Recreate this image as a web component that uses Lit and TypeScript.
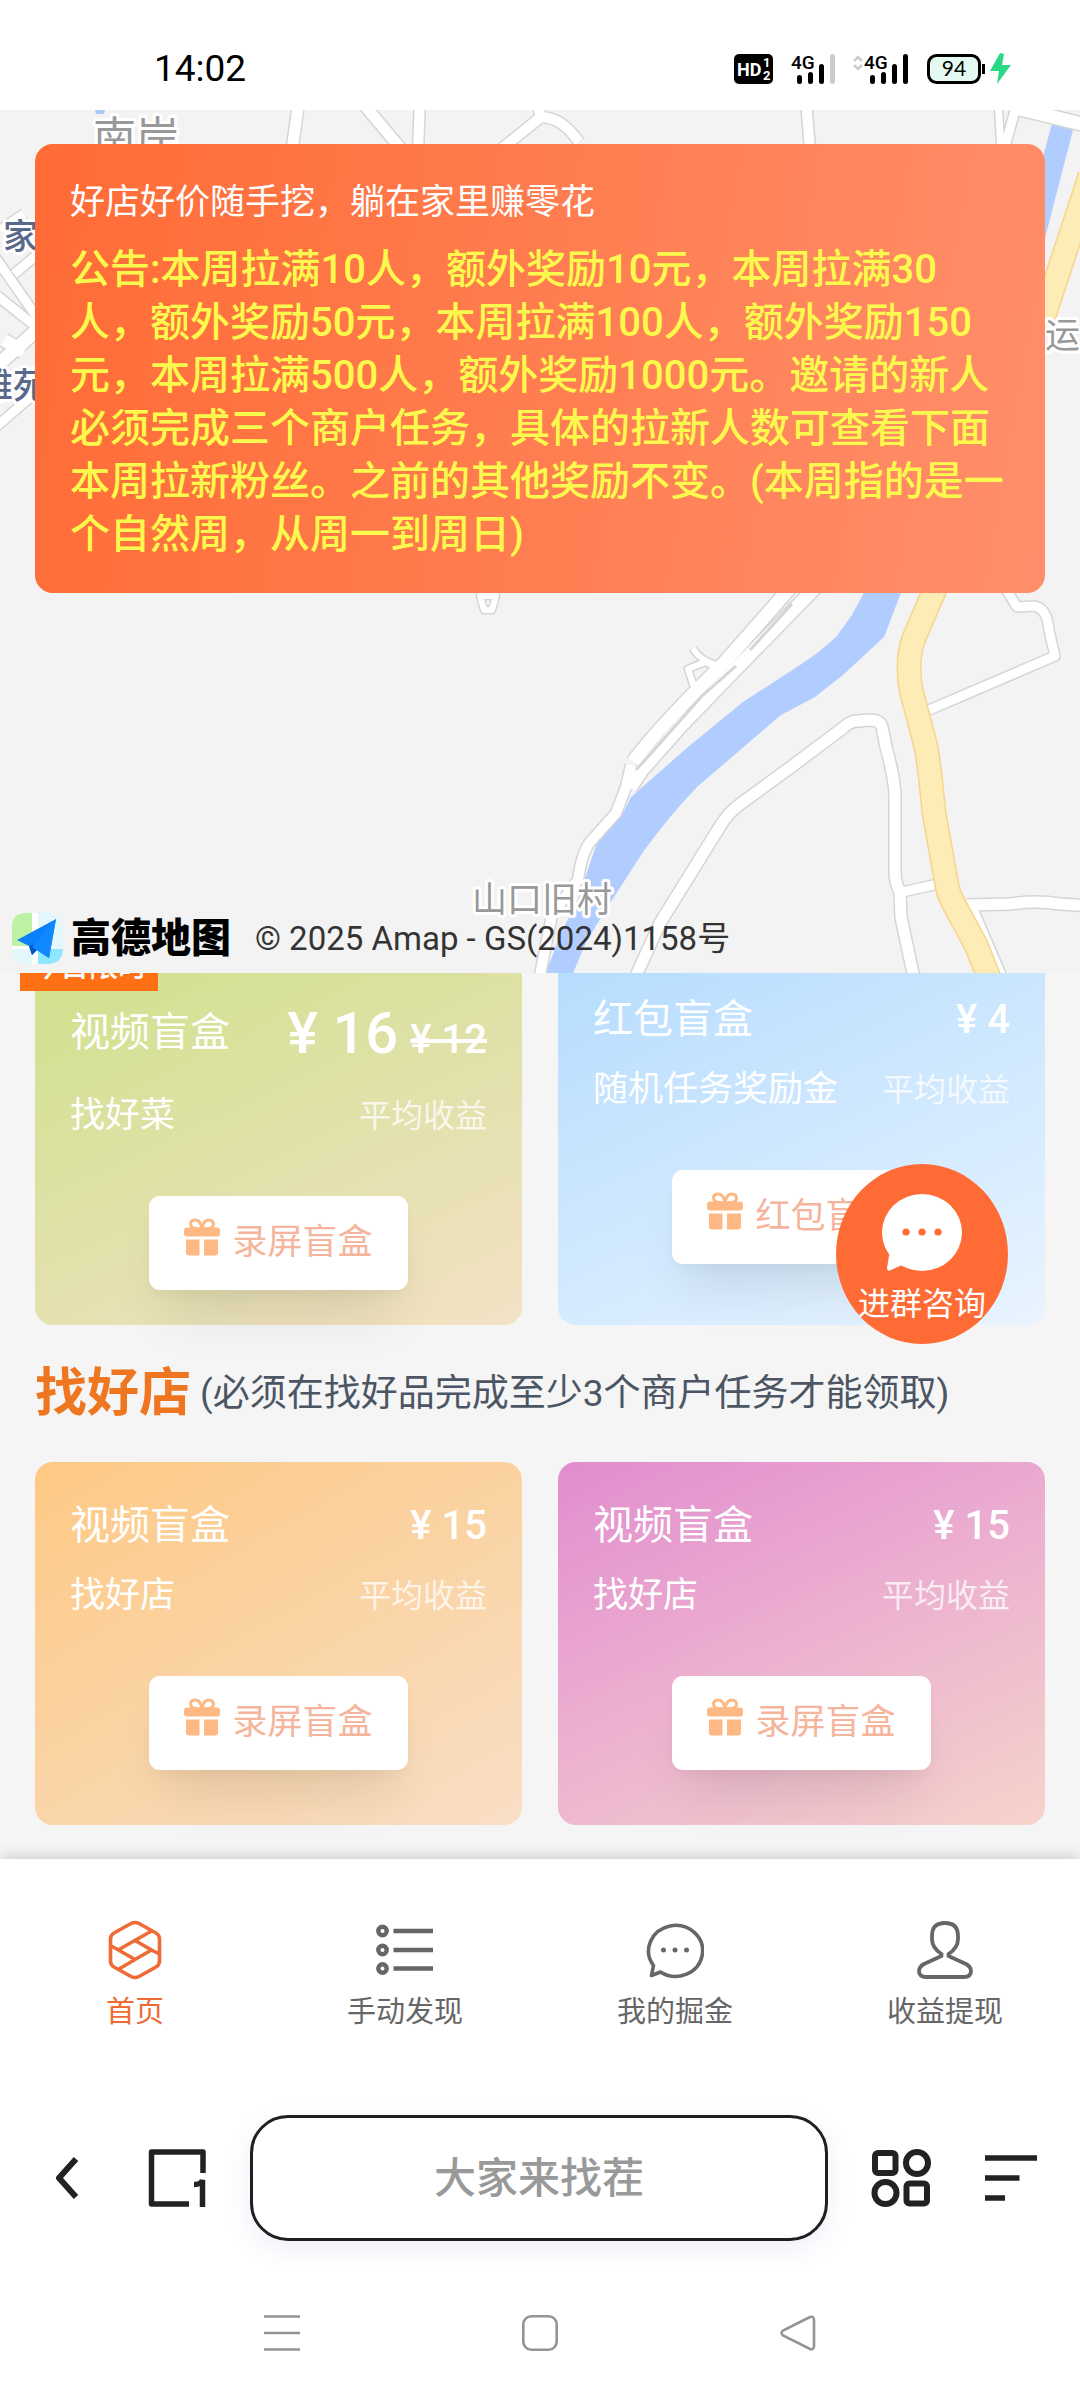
import { LitElement, html, css, svg, nothing } from "lit";
import { customElement, property } from "lit/decorators.js";
import { classMap } from "lit/directives/class-map.js";

const base = css`
  *,
  *::before,
  *::after {
    box-sizing: border-box;
  }
  button {
    margin: 0;
    padding: 0;
    border: 0;
    background: none;
    color: inherit;
    font: inherit;
    cursor: pointer;
  }
  svg {
    display: block;
    flex: none;
  }
`;

/* ---------- status bar ---------- */

@customElement("status-bar")
class StatusBar extends LitElement {
  static styles = [
    base,
    css`
      :host {
        display: flex;
        align-items: center;
        justify-content: space-between;
        height: 110px;
        padding: 28px 69px 0 154px;
        background: #fff;
        color: #000;
      }
      .time {
        font-size: 37px;
        line-height: 44px;
      }
      .icons {
        display: flex;
        align-items: center;
        gap: 18px;
      }
      .icons svg {
        overflow: visible;
      }
      .net {
        font: 500 19px Roboto, sans-serif;
      }
      .hd {
        font: 700 18px Roboto, sans-serif;
      }
      .sub {
        font: 700 13px Roboto, sans-serif;
      }
      .level {
        font: 400 21px Lato, sans-serif;
      }
    `,
  ];

  render() {
    return html`
      <time class="time">14:02</time>
      <div class="icons">
        <svg width="39" height="30" viewBox="0 0 39 30">
          <rect width="39" height="30" rx="5" fill="#000" />
          <text class="hd" x="3" y="22" fill="#fff">HD</text>
          <text class="sub" x="29" y="13" fill="#fff">1</text>
          <text class="sub" x="29" y="26" fill="#fff">2</text>
        </svg>
        <svg width="44" height="30" viewBox="0 0 44 30">
          <text class="net" x="0" y="15">4G</text>
          <g stroke-width="5" stroke-linecap="round" stroke="#000">
            <path d="M8.500 23.500v4M19.500 20.500v7M30.500 12.500v15" />
            <path d="M41.500 2.500v25" stroke="#ccc" />
          </g>
        </svg>
        <svg width="56" height="30" viewBox="0 0 56 30">
          <path d="M1 7l4-4 4 4M1 11l4 4 4-4" fill="none" stroke="#ccc" stroke-width="2.500" />
          <text class="net" x="11" y="15">4G</text>
          <path
            d="M19.500 23.500v4M30.500 20.500v7M41.500 12.500v15M52.500 2.500v25"
            stroke-width="5"
            stroke-linecap="round"
            stroke="#000"
          />
        </svg>
        <svg width="84" height="32" viewBox="0 0 84 32">
          <rect x="1.500" y="2.500" width="51" height="27" rx="8" fill="#e4f9ef" stroke="#000" stroke-width="3" />
          <path d="M56.500 11v10" stroke="#000" stroke-width="3" />
          <text class="level" x="27" y="23" text-anchor="middle">94</text>
          <path d="M73 0L63 18h9l-2 13 14-19h-9l2-11z" fill="#2bd886" />
        </svg>
      </div>
    `;
  }
}

/* ---------- map ---------- */

type Road = [path: string, width: number];

const ROADS: Road[] = [
  ["M299 100L292 150", 11],
  ["M360 100L402 150", 11],
  ["M420 100L418 150", 10],
  ["M500 150L541 117C556 118 566 124 579 142M536 100L541 117", 10],
  ["M806 100L810 150", 10],
  ["M998 100L1001 150", 7],
  ["M1018 100L1004 150", 9],
  ["M1012 107L1090 126", 13],
  ["M-10 250L46 330M-10 290L50 338M14 274L50 244M0 230L24 214", 9],
  ["M-10 372L46 322M4 340L24 352", 13],
  ["M-10 432L50 380", 9],
  ["M480 596L484 610H492L496 596Z", 6],
  ["M635 978L660 923L719 828Q728 812 743 802L791 767L843 728Q850 721 858 721L870 720Q880 720 882 727L886 747Q895 780 895 797V873Q895 882 900 892L901 917L914 978", 11],
  ["M902 892L938 884", 9],
  ["M929 710L1055 656L1049 630Q1047 608 1034 606L1017 607L1004 586", 9],
  ["M967 905L1010 904Q1036 900 1060 904L1090 906", 11],
  ["M974 910L1003 978", 8],
  ["M540 975L552 915L578 880Q582 850 592 840L616 813L626 787L631 765", 10],
  ["M630 788L642 770L680 727L735 670L815 588", 13],
  ["M633 762Q650 738 697 690L724 663L790 588", 13],
  ["M695 690L688 669L705 662L724 670M693 648Q700 662 722 666", 6],
];

const MEDIANS = "M636 770L654 750L702 696L736 666M750 650L792 604";
const RIVER =
  "M868 585L852 615L836 637Q820 652 800 665L743 702L688 747L631 797L621 817L597 843L586 875L578 900L561 933L544 978H571L587 940L614 897L643 852Q670 815 697 787L781 715L815 697L843 675L884 637L904 585Z";
const RIVER_NORTH = "M1053 120L1074 126L1044 242L1030 242L1036 182Z";
const HIGHWAY = "M938 582L914 638Q906 660 911 690L926 747Q930 770 934 813L946 880Q948 895 956 908L976 945L990 980";
const HIGHWAY_NORTH = "M1090 176L1044 316";

@customElement("map-canvas")
class MapCanvas extends LitElement {
  static styles = [
    base,
    css`
      :host {
        display: block;
      }
      svg {
        width: 100%;
        height: 100%;
      }
      .place {
        font-family: Roboto, "Noto Sans CJK SC", sans-serif;
        fill: #999;
        stroke: #fff;
        stroke-width: 6px;
        stroke-linejoin: round;
        paint-order: stroke;
      }
      .small {
        font-size: 35px;
      }
      .large {
        font-size: 43px;
      }
      .estate {
        font-weight: 500;
        fill: #58698a;
      }
    `,
  ];

  render() {
    return html`
      <svg viewBox="0 110 1080 863" preserveAspectRatio="xMidYMin slice" aria-hidden="true">
        <rect y="110" width="1080" height="863" fill="#f3f3f3" />
        <path d="M94 106h12l-2 8h-8z" fill="#a9c9fb" />
        <path d=${RIVER} fill="#b1cdff" />
        <path d=${RIVER_NORTH} fill="#b1cdff" />
        <g fill="none" stroke="#d5d5d5" stroke-linejoin="round">
          ${ROADS.map(([d, w]) => svg`<path d=${d} stroke-width=${w + 3} />`)}
        </g>
        <g fill="none" stroke="#fff" stroke-linejoin="round">
          ${ROADS.map(([d, w]) => svg`<path d=${d} stroke-width=${w} />`)}
        </g>
        <path d=${MEDIANS} fill="none" stroke="#d5d5d5" stroke-width="3" />
        <g fill="none" stroke="#f7d48c" stroke-width="25">
          <path d=${HIGHWAY} />
          <path d=${HIGHWAY_NORTH} />
        </g>
        <g fill="none" stroke="#feecb6" stroke-width="22">
          <path d=${HIGHWAY} />
          <path d=${HIGHWAY_NORTH} />
        </g>
        <text class="place large" x="93" y="153">南岸</text>
        <text class="place small estate" x="3" y="249">家</text>
        <text class="place small estate" x="-22" y="398">雅苑</text>
        <text class="place small" x="1045" y="348">运</text>
        <text class="place small" x="472" y="912">山口旧村</text>
      </svg>
    `;
  }
}

/* ---------- blind box card ---------- */

const giftIcon = html`
  <svg width="36" height="38" viewBox="0 0 36 38" aria-hidden="true">
    <path
      d="M17 11C10 11 6.500 9 6.500 6S9 2 11.500 2C15 2 17 6 18 10C19 6 21 2 24.500 2S29.500 3.500 29.500 6.500S26 11 19 11"
      fill="none"
      stroke="#fdb883"
      stroke-width="3"
    />
    <path
      d="M3 9.500H33A3 3 0 0 1 36 12.500V15.500A3 3 0 0 1 33 18.500H3A3 3 0 0 1 0 15.500V12.500A3 3 0 0 1 3 9.500ZM2 21.500H15.500V37.500H5A3 3 0 0 1 2 34.500ZM20 21.500H34V34.500A3 3 0 0 1 31 37.500H20Z"
      fill="#fdb883"
    />
  </svg>
`;

@customElement("box-card")
class BoxCard extends LitElement {
  @property() tone = "orange";
  @property() heading = "";
  @property() price = "";
  @property() oldPrice = "";
  @property() source = "";
  @property() action = "";
  @property() badge = "";

  static styles = [
    base,
    css`
      :host {
        display: block;
      }
      .card {
        position: relative;
        display: flex;
        flex-direction: column;
        height: 100%;
        min-height: 363px;
        padding: 34px 35px 35px;
        border-radius: 18px;
        color: #fff;
      }
      .green {
        background: linear-gradient(155deg, #cfe18b, #e2e1ac 55%, #f4e1c5);
      }
      .blue {
        background: linear-gradient(155deg, #b5dcfe, #e9f4ff);
      }
      .orange {
        background: linear-gradient(150deg, #fec984, #fad5a8 55%, #f9dfc6);
      }
      .pink {
        background: linear-gradient(155deg, #e28dce, #ecb1d0 50%, #f6d4cb);
      }
      .row {
        display: flex;
        align-items: center;
        justify-content: space-between;
      }
      .title {
        font-size: 40px;
        line-height: 60px;
      }
      .price {
        font-size: 40px;
        font-weight: 500;
        line-height: 60px;
        white-space: nowrap;
      }
      .big {
        margin-right: 12px;
        font-size: 58px;
        line-height: 86px;
      }
      .meta {
        margin-top: 14px;
        line-height: 52px;
      }
      .source {
        font-size: 35px;
      }
      .hint {
        font-size: 32px;
        opacity: 0.75;
      }
      .action {
        display: flex;
        align-items: center;
        align-self: center;
        gap: 12px;
        height: 94px;
        margin-top: 54px;
        padding: 0 35px;
        border-radius: 11px;
        background: #fff;
        box-shadow: 0 36px 54px -16px rgba(0, 0, 0, 0.1), 0 6px 16px -4px rgba(0, 0, 0, 0.05);
        color: #f5b59c;
        font-size: 35px;
        line-height: 52px;
      }
      .action svg {
        margin-bottom: 12px;
      }
      .badge {
        position: absolute;
        top: -13px;
        left: -15px;
        padding: 0 11px;
        background: #ff6f14;
        font-size: 29px;
        font-weight: 500;
        line-height: 48px;
      }
    `,
  ];

  render() {
    return html`
      <article class="card ${this.tone}">
        ${this.badge ? html`<span class="badge">${this.badge}</span>` : nothing}
        <div class="row">
          <span class="title">${this.heading}</span>
          <span class="price"
            >${this.oldPrice
              ? html`<span class="big">${this.price}</span><s>${this.oldPrice}</s>`
              : this.price}</span
          >
        </div>
        <div class="row meta">
          <span class="source">${this.source}</span>
          <span class="hint">平均收益</span>
        </div>
        <button class="action" type="button">${giftIcon}<span>${this.action}</span></button>
      </article>
    `;
  }
}

/* ---------- page tab bar ---------- */

const homeIcon = html`
  <svg width="58" height="60" viewBox="0 0 58 60" fill="none" stroke="currentColor" stroke-width="3.600" stroke-linejoin="round" aria-hidden="true">
    <path d="M25 3.500Q29 1.500 33 3.500L50 13Q53.500 15 53.500 19V41Q53.500 45 50 47L33 56.500Q29 58.500 25 56.500L8 47Q4.500 45 4.500 41V19Q4.500 15 8 13Z" />
    <path d="M45.500 11L13 29.500M4.500 25.500L29 39.500L45.500 30L29 20.500M29 39.500L13 49M45.500 30L53.500 34" />
  </svg>
`;
const listIcon = html`
  <svg width="58" height="60" viewBox="0 0 58 60" fill="none" stroke="currentColor" stroke-width="4.400" aria-hidden="true">
    <circle cx="6.500" cy="11" r="4.200" />
    <circle cx="6.500" cy="30" r="4.200" />
    <circle cx="6.500" cy="48.500" r="4.200" />
    <path d="M17.500 11H57M17.500 30H57M17.500 48.500H57" />
  </svg>
`;
const chatIcon = html`
  <svg width="58" height="60" viewBox="0 0 58 60" aria-hidden="true">
    <path
      d="M7.500 45.500A27 25.500 0 1 1 14.500 52L5.500 55.500Z"
      fill="none"
      stroke="currentColor"
      stroke-width="3.600"
      stroke-linejoin="round"
    />
    <g fill="currentColor">
      <circle cx="17.500" cy="30" r="2.500" />
      <circle cx="29" cy="30" r="2.500" />
      <circle cx="40.500" cy="30" r="2.500" />
    </g>
  </svg>
`;
const personIcon = html`
  <svg width="58" height="60" viewBox="0 0 58 60" fill="none" stroke="currentColor" stroke-width="3.800" stroke-linejoin="round" aria-hidden="true">
    <path d="M25.500 34Q16 28 16 19V16Q16 3 29 3T42 16V19Q42 28 32.500 34V36L50 44Q55 47 55 51Q55 57 48 57H10Q3 57 3 51Q3 47 8 44L25.500 36Z" />
  </svg>
`;

const TABS = [
  { label: "首页", icon: homeIcon },
  { label: "手动发现", icon: listIcon },
  { label: "我的掘金", icon: chatIcon },
  { label: "收益提现", icon: personIcon },
];

@customElement("tab-bar")
class TabBar extends LitElement {
  @property({ type: Number }) active = 0;

  static styles = [
    base,
    css`
      :host {
        display: block;
        position: relative;
        background: #fff;
        box-shadow: 0 0 16px rgba(0, 0, 0, 0.22);
      }
      nav {
        display: grid;
        grid-template-columns: repeat(4, 1fr);
        padding: 61px 0 56px;
      }
      a {
        display: flex;
        flex-direction: column;
        align-items: center;
        gap: 10px;
        color: #666;
        font-size: 29px;
        line-height: 44px;
        text-decoration: none;
      }
      .on {
        color: #f06a35;
      }
    `,
  ];

  render() {
    return html`
      <nav>
        ${TABS.map(
          (tab, i) => html`
            <a href="#" class=${classMap({ on: i === this.active })}>${tab.icon}<span>${tab.label}</span></a>
          `
        )}
      </nav>
    `;
  }
}

/* ---------- browser toolbar and system keys ---------- */

@customElement("browser-bar")
class BrowserBar extends LitElement {
  static styles = [
    base,
    css`
      :host {
        display: block;
        position: relative;
        background: #fff;
      }
      .tools {
        display: flex;
        align-items: center;
        padding: 25px 14px 25px 12px;
      }
      .tool {
        display: grid;
        place-items: center;
        width: 110px;
        height: 110px;
      }
      .address {
        flex: 1;
        min-width: 0;
        height: 126px;
        margin: 0 18px;
        border: 3px solid #1f1f1f;
        border-radius: 38px;
        background: #fff;
        box-shadow: 0 8px 26px rgba(90, 100, 200, 0.1);
        color: #222;
        font: 500 42px Roboto, "Noto Sans CJK SC", sans-serif;
        text-align: center;
      }
      .address::placeholder {
        color: #999;
        opacity: 1;
      }
      .keys {
        display: flex;
        justify-content: center;
        gap: 148px;
        padding: 12px 0;
      }
    `,
  ];

  render() {
    return html`
      <div class="tools">
        <button class="tool" type="button" aria-label="后退">
          <svg width="24" height="44" viewBox="0 0 24 44" fill="none" stroke="#222" stroke-width="6" stroke-linejoin="round">
            <path d="M21 3L4 22L21 41" />
          </svg>
        </button>
        <button class="tool" type="button" aria-label="标签页">
          <svg width="58" height="60" viewBox="0 0 58 60" fill="none" stroke="#222" stroke-width="5.500" stroke-linejoin="round">
            <path d="M41 56H3.500V4H55V25" />
            <path d="M46 36.500Q53 36.500 54.500 32V59" stroke-linejoin="miter" />
          </svg>
        </button>
        <input class="address" type="text" placeholder="大家来找茬" aria-label="地址" />
        <button class="tool" type="button" aria-label="应用">
          <svg width="60" height="58" viewBox="0 0 60 58" fill="none" stroke="#222" stroke-width="6">
            <rect x="4" y="4" width="20.500" height="20" rx="3" />
            <circle cx="46" cy="14" r="11" />
            <circle cx="14.500" cy="44" r="11" />
            <rect x="35.500" y="34.500" width="20.500" height="20" rx="3" />
          </svg>
        </button>
        <button class="tool" type="button" aria-label="菜单">
          <svg width="52" height="46" viewBox="0 0 52 46" fill="none" stroke="#222" stroke-width="5.500">
            <path d="M0 3H52M0 23H34.500M0 43H20" />
          </svg>
        </button>
      </div>
      <div class="keys">
        <button class="tool" type="button" aria-label="最近任务">
          <svg width="36" height="36" viewBox="0 0 36 36" fill="none" stroke="#949494" stroke-width="2.600">
            <path d="M0 1.500H36M0 18H36M0 34.500H36" />
          </svg>
        </button>
        <button class="tool" type="button" aria-label="主屏幕">
          <svg width="36" height="36" viewBox="0 0 36 36" fill="none" stroke="#949494" stroke-width="2.600">
            <rect x="1.300" y="1.300" width="33.400" height="33.400" rx="8" />
          </svg>
        </button>
        <button class="tool" type="button" aria-label="返回">
          <svg width="36" height="36" viewBox="0 0 36 36" fill="none" stroke="#949494" stroke-width="2.600">
            <path d="M30 2L3 15.500Q0 18 3 20.500L30 34Q34 35 34 31V5Q34 1 30 2Z" />
          </svg>
        </button>
      </div>
    `;
  }
}

/* ---------- page ---------- */

@customElement("app-root")
class AppRoot extends LitElement {
  static styles = [
    base,
    css`
      :host {
        display: flex;
        flex-direction: column;
        min-height: 100vh;
        background: #f5f5f5;
        font-family: Roboto, "Noto Sans CJK SC", sans-serif;
      }
      .map {
        position: relative;
        z-index: 1;
        padding: 34px 35px 9px;
      }
      .canvas {
        position: absolute;
        inset: 0;
        overflow: hidden;
      }
      .notice {
        position: relative;
        padding: 35px 35px 32px;
        border-radius: 18px;
        background: linear-gradient(100deg, #ff6b35, #ff8f6b);
        color: #fff;
      }
      .notice h1 {
        margin: 0;
        font-size: 35px;
        font-weight: 400;
        line-height: 48px;
      }
      .notice p {
        margin: 16px 0 0;
        color: #fbf94e;
        font-size: 40px;
        font-weight: 500;
        line-height: 53px;
      }
      .credit {
        position: relative;
        display: flex;
        align-items: center;
        margin: 320px -23px 0;
      }
      .brand {
        margin: 0 24px 0 8px;
        color: #000;
        font-size: 40px;
        font-weight: 900;
        line-height: 51px;
      }
      .rights {
        color: #333;
        font-size: 33px;
        line-height: 48px;
      }
      main {
        position: relative;
        flex: 1;
        margin-top: -17px;
        padding: 0 35px 34px;
      }
      .grid {
        display: grid;
        grid-template-columns: 1fr 1fr;
        gap: 36px;
      }
      .section {
        display: flex;
        align-items: center;
        gap: 9px;
        margin: 0;
        padding: 30px 0 29px;
        line-height: 78px;
      }
      .section h2 {
        margin: 0;
        color: #ee7621;
        font-size: 52px;
        font-weight: 600;
      }
      .section p {
        margin: 0;
        color: #4b5563;
        font-size: 37px;
      }
      .contact {
        position: absolute;
        top: 208px;
        right: 72px;
        display: flex;
        flex-direction: column;
        align-items: center;
        width: 172px;
        height: 180px;
        padding-top: 30px;
        border-radius: 50%;
        background: #ff6b35;
        color: #fff;
        font-size: 32px;
        line-height: 48px;
        white-space: nowrap;
      }
      .contact svg {
        margin-bottom: 8px;
      }
    `,
  ];

  render() {
    return html`
      <status-bar></status-bar>
      <section class="map">
        <map-canvas class="canvas"></map-canvas>
        <div class="notice">
          <h1>好店好价随手挖，躺在家里赚零花</h1>
          <p>
            公告:本周拉满10人，额外奖励10元，本周拉满30人，额外奖励50元，本周拉满100人，额外奖励150元，本周拉满500人，额外奖励1000元。邀请的新人必须完成三个商户任务，具体的拉新人数可查看下面本周拉新粉丝。之前的其他奖励不变。(本周指的是一个自然周，从周一到周日)
          </p>
        </div>
        <div class="credit">
          <svg width="51" height="51" viewBox="0 0 51 51" aria-hidden="true">
            <rect width="51" height="51" rx="14" fill="#e4f7fd" />
            <path d="M14 0H20V33H0V14Q0 0 14 0Z" fill="#bdf2a4" />
            <path d="M26 36H51Q50 51 36 51H26Z" fill="#8fe6ff" />
            <path d="M20 0H26V20L20 24ZM0 33H20V51H26V36H0Z" fill="#fff" />
            <path d="M44 6L5 27L17 33L20 42L25 37L37 45Z" fill="#0b80fb" />
            <path d="M17 33L20 42L25 37L26 30Z" fill="#0456c9" />
            <path d="M44 6L20 34L37 45Z" fill="#1089ff" />
          </svg>
          <span class="brand">高德地图</span>
          <span class="rights">© 2025 Amap - GS(2024)1158号</span>
        </div>
      </section>
      <main>
        <div class="grid">
          <box-card
            tone="green"
            badge="今日限时"
            heading="视频盲盒"
            price="¥ 16"
            .oldPrice=${"¥ 12"}
            source="找好菜"
            action="录屏盲盒"
          ></box-card>
          <box-card tone="blue" heading="红包盲盒" price="¥ 4" source="随机任务奖励金" action="红包盲盒"></box-card>
        </div>
        <header class="section">
          <h2>找好店</h2>
          <p>(必须在找好品完成至少3个商户任务才能领取)</p>
        </header>
        <div class="grid">
          <box-card tone="orange" heading="视频盲盒" price="¥ 15" source="找好店" action="录屏盲盒"></box-card>
          <box-card tone="pink" heading="视频盲盒" price="¥ 15" source="找好店" action="录屏盲盒"></box-card>
        </div>
        <button class="contact" type="button">
          <svg width="80" height="78" viewBox="0 0 80 78" aria-hidden="true">
            <ellipse cx="40" cy="38.500" rx="40" ry="38.500" fill="#fff" />
            <path d="M8 56L5 74Q5 78 9 76L20 71Q26 74 30 74Z" fill="#fff" />
            <g fill="#ff6b35">
              <circle cx="24" cy="38" r="3.600" />
              <circle cx="40" cy="38" r="3.600" />
              <circle cx="56" cy="38" r="3.600" />
            </g>
          </svg>
          <span>进群咨询</span>
        </button>
      </main>
      <tab-bar></tab-bar>
      <browser-bar></browser-bar>
    `;
  }
}
